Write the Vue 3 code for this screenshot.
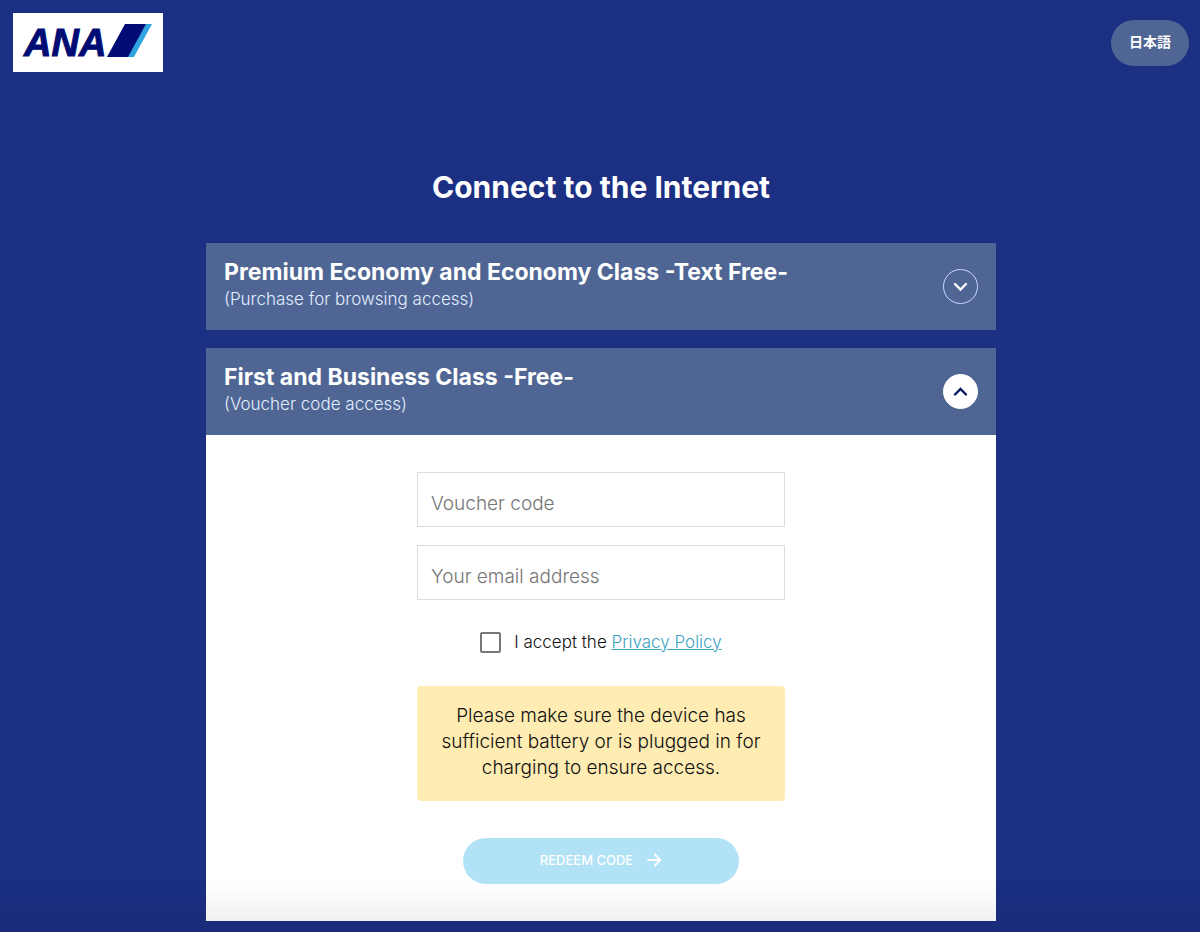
<script setup>
import { ref } from 'vue'

const openPanel = ref('voucher')
const voucher = ref('')
const email = ref('')
const accepted = ref(false)

const toggle = (id) => {
  openPanel.value = openPanel.value === id ? '' : id
}

const sections = [
  { id: 'purchase', title: 'Premium Economy and Economy Class -Text Free-', note: '(Purchase for browsing access)' },
  { id: 'voucher', title: 'First and Business Class -Free-', note: '(Voucher code access)' },
]
</script>

<template>
  <div class="page">
    <header class="top">
      <a class="logo" href="#" aria-label="ANA home">
        <svg width="150" height="59" viewBox="0 0 150 59" aria-hidden="true">
          <text class="logo-text" x="11" y="43">ANA</text>
          <polygon points="112,11 134,11 116,44 94,44" fill="#000c74" />
          <polygon points="133,11 139,11 121,44 115,44" fill="#2fa4df" />
        </svg>
      </a>
      <button class="language" type="button" lang="ja">日本語</button>
    </header>

    <main class="content">
      <h1>Connect to the Internet</h1>

      <section v-for="s in sections" :key="s.id" class="section">
        <button class="bar" type="button" :aria-expanded="openPanel === s.id" @click="toggle(s.id)">
          <span class="bar-text">
            <span class="bar-title">{{ s.title }}</span>
            <span class="bar-note">{{ s.note }}</span>
          </span>
          <span class="chevron" :class="{ open: openPanel === s.id }">
            <svg width="33" height="33" viewBox="0 0 33 33" aria-hidden="true">
              <path v-if="openPanel === s.id" d="M11 19.500 L16.500 14 L22 19.500" />
              <path v-else d="M11 14 L16.500 19.500 L22 14" />
            </svg>
          </span>
        </button>

        <form v-if="s.id === 'voucher' && openPanel === s.id" class="panel" @submit.prevent>
          <input v-model="voucher" class="field" type="text" placeholder="Voucher code" aria-label="Voucher code" />
          <input v-model="email" class="field" type="email" placeholder="Your email address" aria-label="Your email address" />
          <div class="accept">
            <input id="accept" v-model="accepted" type="checkbox" />
            <label for="accept">I accept the <a href="#">Privacy Policy</a></label>
          </div>
          <p class="notice">Please make sure the device has sufficient battery or is plugged in for charging to ensure access.</p>
          <button class="redeem" type="submit">
            REDEEM CODE
            <svg width="16" height="16" viewBox="0 0 16 16" aria-hidden="true">
              <path d="M1.500 8 H14 M8.500 2 L14.300 8 L8.500 14" />
            </svg>
          </button>
        </form>
      </section>
    </main>
    <div class="shade"></div>
  </div>
</template>

<style>
body {
  margin: 0;
  background: #1b2f83;
}
</style>

<style scoped>
.page {
  box-sizing: border-box;
  min-height: 100vh;
  padding: 13px 11px 11px 13px;
  color: #fff;
  font-family: Inter, "Noto Sans CJK JP", sans-serif;
  font-weight: 300;
}
button,
input {
  font: inherit;
}
.top {
  display: flex;
  justify-content: space-between;
  align-items: center;
}
.logo {
  display: block;
  background: #fff;
}
.logo svg {
  display: block;
}
.logo-text {
  fill: #000c74;
  stroke: #000c74;
  stroke-width: 1;
  font: italic bold 38px "Liberation Sans", sans-serif;
}
.language {
  padding: 0 18px 4px;
  height: 46px;
  border: 0;
  border-radius: 23px;
  background: #4f6694;
  color: #fff;
  font-family: "Noto Sans CJK JP", sans-serif;
  font-size: 14px;
  font-weight: 700;
}
.content {
  max-width: 790px;
  margin: 95px auto 0;
}
h1 {
  margin: 0 0 36px;
  text-align: center;
  font-size: 30px;
  line-height: 40px;
  font-weight: 700;
}
.section + .section {
  margin-top: 18px;
}
.bar {
  display: flex;
  width: 100%;
  justify-content: space-between;
  align-items: center;
  box-sizing: border-box;
  min-height: 87px;
  padding: 15px 18px 17px;
  border: 0;
  background: #4f6694;
  color: #fff;
  text-align: left;
}
.bar-text {
  display: flex;
  flex-direction: column;
}
.bar-title {
  font-size: 23px;
  line-height: 28px;
  font-weight: 700;
}
.bar-note {
  color: #e2edff;
  font-size: 17px;
  line-height: 27px;
}
.chevron {
  box-sizing: border-box;
  width: 35px;
  height: 35px;
  margin-top: 2px;
  border: 1px solid #c9d9fb;
  border-radius: 50%;
}
.chevron.open {
  border-color: #fff;
  background: #fff;
  color: #0b1660;
}
.chevron svg {
  display: block;
  fill: none;
  stroke: currentColor;
  stroke-width: 2.400;
  stroke-linecap: round;
}
.panel {
  display: flex;
  flex-direction: column;
  align-items: center;
  padding: 37px 18px;
  background: #fff;
  color: #111;
}
.field {
  box-sizing: border-box;
  width: 100%;
  max-width: 368px;
  height: 55px;
  margin-bottom: 18px;
  padding: 8px 13px 0;
  border: 1px solid #dcdcde;
  border-radius: 0;
  font-size: 19px;
}
.field::placeholder {
  color: #757575;
  opacity: 1;
}
.accept {
  display: flex;
  align-items: center;
  gap: 13px;
  margin: 12px 0 32px;
  font-size: 17px;
  line-height: 24px;
}
.accept input {
  appearance: none;
  box-sizing: border-box;
  width: 21px;
  height: 21px;
  margin: 0;
  border: 2px solid #777;
  border-radius: 2px;
}
.accept input:checked {
  background: #777;
}
.accept a {
  color: #3da4bf;
}
.notice {
  box-sizing: border-box;
  width: 100%;
  max-width: 368px;
  margin: 0 0 37px;
  padding: 17px 18px 20px;
  border-radius: 4px;
  background: #feecb2;
  text-align: center;
  font-size: 19px;
  line-height: 26px;
}
.redeem {
  display: flex;
  justify-content: center;
  align-items: center;
  gap: 13px;
  width: 276px;
  height: 46px;
  padding-bottom: 3px;
  border: 0;
  border-radius: 23px;
  background: #b2e2f6;
  color: #fff;
  font-size: 13px;
  font-weight: 500;
}
.redeem svg {
  fill: none;
  stroke: currentColor;
  stroke-width: 2;
}
.shade {
  position: fixed;
  right: 0;
  bottom: 0;
  left: 0;
  height: 50px;
  background: linear-gradient(rgba(0, 0, 0, 0), rgba(0, 0, 0, 0.07));
  pointer-events: none;
}
</style>
